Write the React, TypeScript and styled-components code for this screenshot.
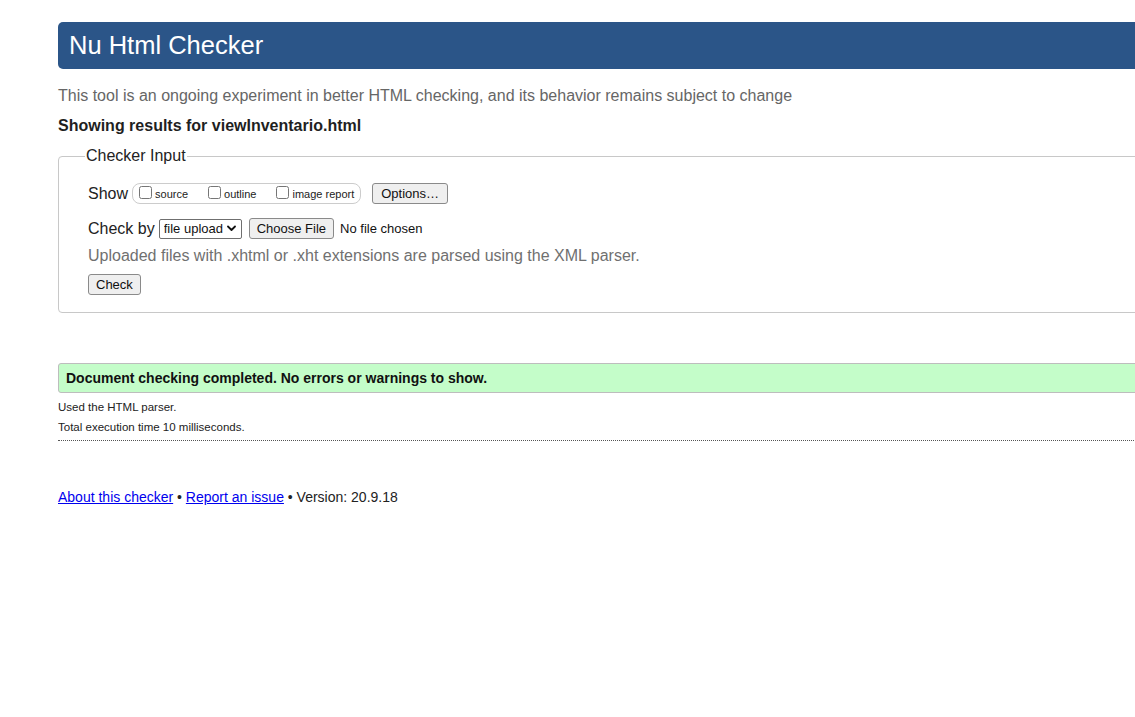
import React from "react";
import styled, { createGlobalStyle } from "styled-components";

const GlobalStyle = createGlobalStyle`
  html, body {
    margin: 0;
    padding: 0;
    background: #ffffff;
    overflow: hidden;
  }
  body {
    font-family: "Liberation Sans", Arial, Helvetica, sans-serif;
    color: #222222;
  }
`;

const Page = styled.div`
  width: 1300px;
  padding: 22px 0 40px 58px;
  display: flex;
  flex-direction: column;
`;

const Header = styled.h1`
  margin: 0;
  height: 47px;
  padding: 0 11px;
  background: #2b5588;
  color: #ffffff;
  font-size: 25.5px;
  font-weight: normal;
  line-height: 47px;
  border-radius: 5px 0 0 5px;
`;

const Intro = styled.p`
  margin: 17px 0 0;
  font-size: 16px;
  line-height: 19px;
  color: #666666;
`;

const Showing = styled.p`
  margin: 11px 0 0;
  font-size: 16px;
  line-height: 19px;
  font-weight: bold;
  color: #1f1f1f;
`;

const Fieldset = styled.fieldset`
  margin: 12px 0 0;
  padding: 0 29px 17px;
  border: 1px solid #c8c8c8;
  border-radius: 4px;
  display: flex;
  flex-direction: column;
  min-width: 0;
`;

const Legend = styled.legend`
  margin-left: -3px;
  padding: 0 1px;
  font-size: 16px;
  line-height: 18px;
  color: #222222;
`;

const Row = styled.div<{ $top: number }>`
  display: flex;
  align-items: center;
  margin-top: ${(p) => p.$top}px;
  height: 21px;
`;

const Label = styled.span`
  font-size: 16px;
  color: #222222;
  margin-right: 4px;
`;

const CheckGroup = styled.span`
  display: inline-flex;
  align-items: center;
  height: 19px;
  padding: 0 6px 0 6px;
  border: 1px solid #cccccc;
  border-radius: 8px;
  gap: 20px;
`;

const CheckItem = styled.label`
  display: inline-flex;
  align-items: center;
  font-size: 11px;
  color: #222222;
`;

const Box = styled.input`
  margin: -3px 3px 0 0;
  width: 13px;
  height: 13px;
`;

const Button = styled.button<{ $pad?: number }>`
  height: 21px;
  padding: 0 ${(p) => p.$pad ?? 7}px;
  font-family: "Liberation Sans", Arial, sans-serif;
  font-size: 13px;
  color: #111111;
  background: #efefef;
  border: 1px solid #8a8a8a;
  border-radius: 3px;
`;

const OptionsButton = styled(Button)`
  margin-left: 11px;
`;

const SelectWrap = styled.span`
  position: relative;
  display: inline-flex;
  margin-right: 7px;
`;

const Select = styled.select`
  appearance: none;
  width: 83px;
  height: 20px;
  padding: 0 0 0 4px;
  font-family: "Liberation Sans", Arial, sans-serif;
  font-size: 13px;
  color: #111111;
  background: #ffffff;
  border: 1px solid #6f6f6f;
  border-radius: 2px;
`;

const Chevron = styled.svg`
  position: absolute;
  right: 6px;
  top: 6px;
  pointer-events: none;
`;

const NoFile = styled.span`
  margin-left: 6px;
  font-size: 13px;
  color: #111111;
`;

const Hint = styled.p`
  margin: 7px 0 0;
  font-size: 16px;
  line-height: 19px;
  color: #707070;
`;

const CheckRow = styled.div`
  margin-top: 9px;
  display: flex;
`;

const Success = styled.p`
  margin: 50px 0 0;
  height: 28px;
  padding: 0 7px;
  border: 1px solid #bdbdbd;
  border-radius: 3px;
  background: #c4fdc9;
  font-size: 14px;
  font-weight: bold;
  line-height: 28px;
  color: #111111;
`;

const Detail = styled.p<{ $top: number }>`
  margin: ${(p) => p.$top}px 0 0;
  font-size: 11.5px;
  line-height: 14px;
  color: #222222;
`;

const Rule = styled.hr`
  margin: 6px 0 0;
  border: 0;
  border-top: 1px dotted #555555;
  height: 0;
`;

const Footer = styled.p`
  margin: 48px 0 0;
  font-size: 14px;
  line-height: 17px;
  color: #222222;
`;

const Link = styled.a`
  color: #0000ee;
  text-decoration: underline;
`;

export default function App() {
  return (
    <>
      <GlobalStyle />
      <Page>
        <Header>Nu Html Checker</Header>
        <Intro>
          This tool is an ongoing experiment in better HTML checking, and its behavior remains subject to change
        </Intro>
        <Showing>Showing results for viewInventario.html</Showing>
        <Fieldset>
          <Legend>Checker Input</Legend>
          <Row $top={18}>
            <Label>Show</Label>
            <CheckGroup>
              <CheckItem>
                <Box type="checkbox" />
                source
              </CheckItem>
              <CheckItem>
                <Box type="checkbox" />
                outline
              </CheckItem>
              <CheckItem>
                <Box type="checkbox" />
                image report
              </CheckItem>
            </CheckGroup>
            <OptionsButton $pad={8}>Options…</OptionsButton>
          </Row>
          <Row $top={14}>
            <Label>Check by</Label>
            <SelectWrap>
              <Select defaultValue="file">
                <option value="address">address</option>
                <option value="file">file upload</option>
                <option value="text">text input</option>
              </Select>
              <Chevron width="9" height="7" viewBox="0 0 9 7">
                <path d="M1 1.5 L4.5 5 L8 1.5" fill="none" stroke="#111" strokeWidth="1.8" strokeLinecap="round" strokeLinejoin="round" />
              </Chevron>
            </SelectWrap>
            <Button>Choose File</Button>
            <NoFile>No file chosen</NoFile>
          </Row>
          <Hint>Uploaded files with .xhtml or .xht extensions are parsed using the XML parser.</Hint>
          <CheckRow>
            <Button>Check</Button>
          </CheckRow>
        </Fieldset>
        <Success>Document checking completed. No errors or warnings to show.</Success>
        <Detail $top={7}>Used the HTML parser.</Detail>
        <Detail $top={6}>Total execution time 10 milliseconds.</Detail>
        <Rule />
        <Footer>
          <Link href="#about">About this checker</Link> • <Link href="#issue">Report an issue</Link> • Version: 20.9.18
        </Footer>
      </Page>
    </>
  );
}
